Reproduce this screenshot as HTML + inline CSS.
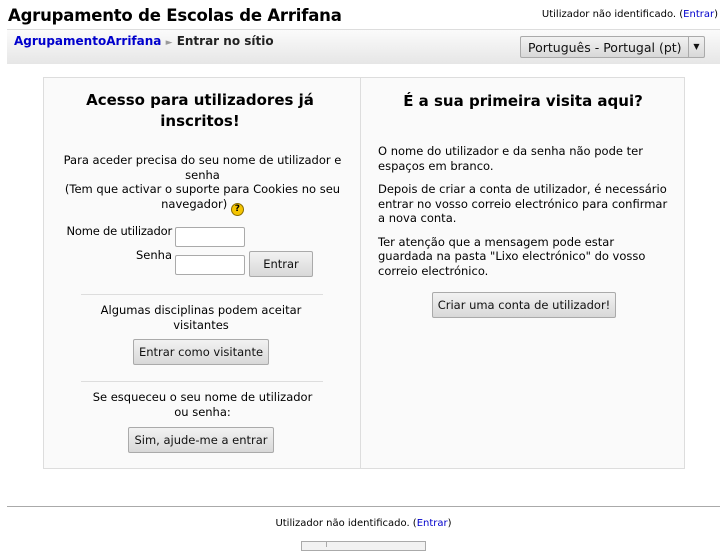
<!DOCTYPE html>
<html><head><meta charset="utf-8"><style>
*{margin:0;padding:0;box-sizing:border-box}
body{width:727px;height:545px;overflow:hidden;background:#fff;font-family:"DejaVu Sans","Liberation Sans",sans-serif;font-size:11.5px;color:#000;position:relative}
.a{position:absolute}
a{color:#00c;text-decoration:none}
.btn{position:absolute;border:1px solid #aaa;border-radius:2px;background:linear-gradient(#f2f2f2,#d8d8d8);font-size:11.5px;text-align:center;color:#111}
.inp{position:absolute;border:1px solid #aaa;background:#fff;height:20px;width:70px;border-radius:2px}
.c{text-align:center;line-height:14.5px}
p{line-height:14.5px}
</style></head><body>
<div class="a" style="left:8px;top:6px;font-size:16.5px;font-weight:bold;letter-spacing:-0.2px">Agrupamento de Escolas de Arrifana</div>
<div class="a" style="right:9px;top:9px;font-size:10px">Utilizador não identificado. (<a>Entrar</a>)</div>
<div class="a" style="left:7px;top:29px;width:713px;height:35px;background:linear-gradient(#fbfbfb,#e6e6e6);border-top:1px solid #ddd"></div>
<div class="a" style="left:14px;top:34px;font-size:12px;font-weight:bold"><a>AgrupamentoArrifana</a> <span style="color:#999;font-size:9px">►</span> <span style="color:#222">Entrar no sítio</span></div>
<div class="btn" style="left:520px;top:36px;width:185px;height:22px;text-align:left;padding:3px 0 0 7px;font-size:12.5px">Português - Portugal (pt)<span style="position:absolute;right:0;top:0;width:16px;height:20px;border-left:1px solid #aaa;text-align:center;font-size:8px;line-height:20px">▼</span></div>
<div class="a" style="left:43px;top:77px;width:642px;height:392px;border:1px solid #ddd;background:#fafafa"></div>
<div class="a" style="left:360px;top:78px;width:1px;height:390px;background:#ddd"></div>
<div class="a c" style="left:60px;top:90px;width:280px;font-size:15px;font-weight:bold;line-height:21px">Acesso para utilizadores já inscritos!</div>
<div class="a c" style="left:55px;top:153px;width:295px">Para aceder precisa do seu nome de utilizador e senha<br>(Tem que activar o suporte para Cookies no seu navegador) <span style="display:inline-block;width:13px;height:13px;border-radius:50%;background:#f5c400;border:1px solid #8a6d00;font-size:9px;font-weight:bold;line-height:11px;vertical-align:-3px">?</span></div>
<div class="a" style="left:40px;width:132px;text-align:right;top:224px;letter-spacing:-0.2px">Nome de utilizador</div>
<div class="inp" style="left:175px;top:227px"></div>
<div class="a" style="left:40px;width:132px;text-align:right;top:248px">Senha</div>
<div class="inp" style="left:175px;top:255px"></div>
<div class="btn" style="left:249px;top:251px;width:64px;height:26px;line-height:24px">Entrar</div>
<div class="a" style="left:81px;top:294px;width:242px;height:1px;background:#ddd"></div>
<div class="a c" style="left:95px;top:303px;width:212px">Algumas disciplinas podem aceitar visitantes</div>
<div class="btn" style="left:133px;top:339px;width:136px;height:26px;line-height:24px">Entrar como visitante</div>
<div class="a" style="left:81px;top:381px;width:242px;height:1px;background:#ddd"></div>
<div class="a c" style="left:90px;top:390px;width:225px">Se esqueceu o seu nome de utilizador ou senha:</div>
<div class="btn" style="left:128px;top:427px;width:146px;height:26px;line-height:24px">Sim, ajude-me a entrar</div>
<div class="a c" style="left:362px;top:91px;width:322px;font-size:15px;font-weight:bold;line-height:21px">É a sua primeira visita aqui?</div>
<div class="a" style="left:378px;top:144px;width:292px">
<p>O nome do utilizador e da senha não pode ter espaços em branco.</p>
<p style="margin-top:9px">Depois de criar a conta de utilizador, é necessário entrar no vosso correio electrónico para confirmar a nova conta.</p>
<p style="margin-top:9px">Ter atenção que a mensagem pode estar guardada na pasta "Lixo electrónico" do vosso correio electrónico.</p>
</div>
<div class="btn" style="left:432px;top:292px;width:184px;height:26px;line-height:24px">Criar uma conta de utilizador!</div>
<div class="a" style="left:7px;top:506px;width:713px;height:1px;background:#aaa"></div>
<div class="a" style="left:0;top:518px;width:727px;text-align:center;font-size:10px">Utilizador não identificado. (<a>Entrar</a>)</div>
<div class="a" style="left:301px;top:541px;width:125px;height:10px;border:1px solid #aaa;background:#f2f2f2"></div>
<div class="a" style="left:326px;top:541px;width:1px;height:6px;background:#aaa"></div>
</body></html>
